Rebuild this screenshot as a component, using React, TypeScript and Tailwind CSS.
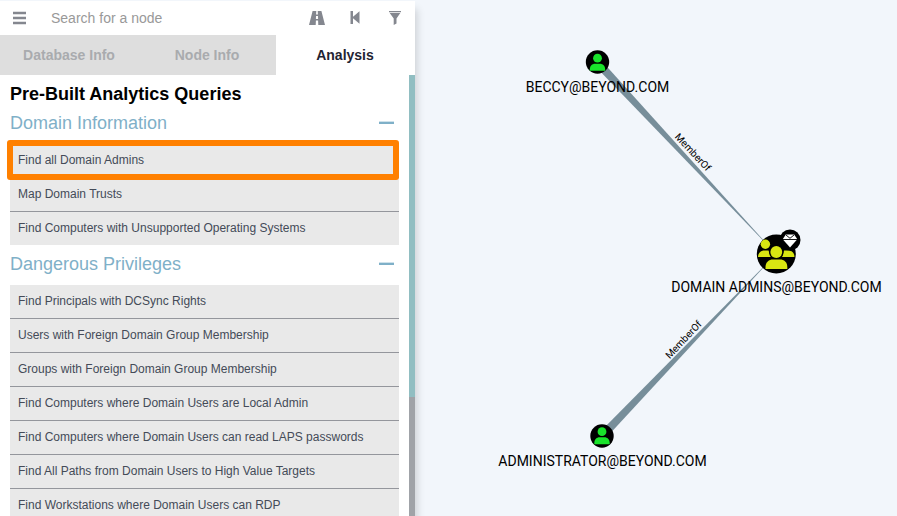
import React from "react";

type Section = { title: string; queries: string[]; highlighted?: number };

const sections: Section[] = [
  {
    title: "Domain Information",
    highlighted: 0,
    queries: [
      "Find all Domain Admins",
      "Map Domain Trusts",
      "Find Computers with Unsupported Operating Systems",
    ],
  },
  {
    title: "Dangerous Privileges",
    queries: [
      "Find Principals with DCSync Rights",
      "Users with Foreign Domain Group Membership",
      "Groups with Foreign Domain Group Membership",
      "Find Computers where Domain Users are Local Admin",
      "Find Computers where Domain Users can read LAPS passwords",
      "Find All Paths from Domain Users to High Value Targets",
      "Find Workstations where Domain Users can RDP",
    ],
  },
];

function SearchBar() {
  return (
    <div className="flex h-[34px] shrink-0 items-center pr-3 pb-px pl-3 text-[#84878f]">
      <button aria-label="Menu" className="flex w-[39px]">
        <svg width="14" height="14" viewBox="0 0 14 14" fill="currentColor">
          <path d="M1 0.7h13v2.6H1zM1 5.7h13v2.6H1zM1 10.7h13v2.6H1z" />
        </svg>
      </button>
      <input
        aria-label="Search for a node"
        placeholder="Search for a node"
        className="min-w-0 flex-1 bg-transparent text-sm text-gray-700 outline-none placeholder:text-[#999999]"
      />
      <button aria-label="Pathfinding" className="flex w-[38px] justify-center">
        <svg width="16" height="14" viewBox="0 0 16 14" fill="currentColor">
          <path d="M3.6 0H7.3L7.1 3.5H8.9L8.7 0H12.4L16 14H9.3L9.1 9.5H6.9L6.7 14H0ZM7 5L6.9 8H9.1L9 5Z" />
        </svg>
      </button>
      <button aria-label="Back" className="flex w-[38px] justify-center">
        <svg width="10" height="13" viewBox="0 0 10 13" fill="currentColor">
          <path d="M0.5 0H3V5.7L9.5 0.3V12.7L3 7.3V13H0.5Z" />
        </svg>
      </button>
      <button aria-label="Filter" className="flex w-[29px] justify-end pr-[2px]">
        <svg width="12" height="14" viewBox="0 0 12 14" fill="currentColor">
          <path d="M0 0H12V1.3H0ZM0.7 2H11.3L7.5 7.5V12.5L4.7 14V7.5Z" />
        </svg>
      </button>
    </div>
  );
}

function Tabs() {
  const base = "flex-1 text-sm font-bold";
  return (
    <div role="tablist" className="flex h-10 shrink-0 pr-px">
      <button role="tab" className={`${base} bg-[#dedede] text-[#a9abae]`}>Database Info</button>
      <button role="tab" className={`${base} bg-[#dedede] text-[#a9abae]`}>Node Info</button>
      <button role="tab" aria-selected="true" className={`${base} text-[#1f2433]`}>Analysis</button>
    </div>
  );
}

function QuerySection({ section }: { section: Section }) {
  return (
    <section>
      <div className="flex h-10 items-center justify-between pr-[5px] pb-[3px] text-[#7fb0c8]">
        <h3 className="text-lg">{section.title}</h3>
        <button aria-label={`Collapse ${section.title}`} className="h-[3px] w-[15px] border-t border-[#cfe2eb] bg-current" />
      </div>
      <ul>
        {section.queries.map((query, i) => (
          <li key={query} className="relative border-b border-[#94969c] bg-[#e9e9e9] last:border-b-0">
            <button className="block h-[33px] w-full px-2 pb-[2px] text-left text-xs text-[#444b58]">{query}</button>
            {section.highlighted === i && (
              <span className="pointer-events-none absolute -top-1 right-0 -bottom-[3px] -left-[3px] z-10 rounded-[3px] border-[6px] border-[#ff8000]" />
            )}
          </li>
        ))}
      </ul>
    </section>
  );
}

function Person({ x, y }: { x: number; y: number }) {
  return (
    <g transform={`translate(${x} ${y})`}>
      <circle cy="-3.8" r="4.4" />
      <path d="M-7.7 8.8V7.5C-7.7 3.8-5.2 1.7-2.5 1.7H2.5C5.2 1.7 7.7 3.8 7.7 7.5V8.8Z" />
    </g>
  );
}

function Graph() {
  return (
    <svg width="482" height="516" viewBox="415 0 482 516" role="img" aria-label="Domain admins graph" className="block font-['Roboto',sans-serif]">
      <g fill="#778e9a">
        <path d="M594 65L600 59L776 254Z" />
        <path d="M599 433L605 439L776 254Z" />
      </g>
      <circle cx="597.5" cy="62" r="11.7" />
      <circle cx="602" cy="436" r="11.7" />
      <g fill="#19e32b">
        <Person x={597.5} y={62} />
        <Person x={602} y={435.5} />
      </g>
      <circle cx="776.3" cy="254" r="19.5" />
      <g fill="#d9e612">
        <circle cx="765.4" cy="244.3" r="4.7" />
        <path d="M758 257C758 253 761 250.5 764 250.5H768.5L771 257Z" />
        <path d="M782 257L784 250.5H788C792 250.5 794.5 253 794.5 257Z" />
      </g>
      <circle cx="776.3" cy="252" r="7.3" />
      <circle cx="776.3" cy="252" r="5.9" fill="#d9e612" />
      <path d="M765.5 269V267C765.5 262 769 259.5 773 259.5H780C784 259.5 787.3 262 787.3 267V269Z" fill="#d9e612" />
      <circle cx="790" cy="240" r="10.5" />
      <path d="M785.8 234.5H794.2L797.3 239.3L790 247.5L782.7 239.3Z" fill="#fff" />
      <path d="M782 239.5H798M786 235L790 238.3L794 235" fill="none" stroke="#000" strokeWidth="0.9" />
      <g fontSize="14" textAnchor="middle" fill="#000">
        <text x="597.5" y="92">BECCY@BEYOND.COM</text>
        <text x="776.5" y="292">DOMAIN ADMINS@BEYOND.COM</text>
        <text x="602.5" y="466">ADMINISTRATOR@BEYOND.COM</text>
      </g>
      <g fontSize="10" textAnchor="middle" fill="#000">
        <text transform="translate(690.5 154.5) rotate(47)">MemberOf</text>
        <text transform="translate(686 342) rotate(-46.5)">MemberOf</text>
      </g>
    </svg>
  );
}

export default function App() {
  return (
    <div className="flex h-screen overflow-hidden bg-[#f2f6fb] pt-px font-['Liberation_Sans',Arial,sans-serif]">
      <aside className="flex w-[415px] shrink-0 flex-col bg-white shadow-[2px_8px_8px_rgba(0,0,0,0.16)]">
        <SearchBar />
        <Tabs />
        <div className="flex min-h-0 flex-1">
          <div className="min-w-0 flex-1 overflow-hidden px-[10px]">
            <h2 className="pt-[9px] text-lg leading-5 font-bold text-black">Pre-Built Analytics Queries</h2>
            {sections.map((section) => (
              <QuerySection key={section.title} section={section} />
            ))}
          </div>
          <div className="w-[6px] shrink-0 bg-[#a0a3a8]">
            <div className="h-[73%] bg-[#91bec2]" />
          </div>
        </div>
      </aside>
      <main className="-mt-px min-w-0 flex-1">
        <Graph />
      </main>
    </div>
  );
}
